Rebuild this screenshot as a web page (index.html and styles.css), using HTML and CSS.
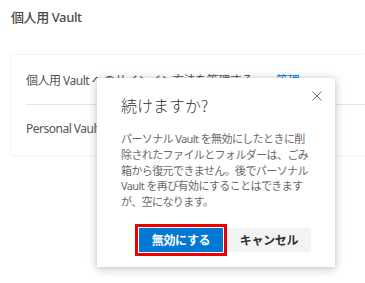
FILE: index.html
```html
<!DOCTYPE html>
<html lang="ja">
<head>
<meta charset="utf-8">
<link rel="stylesheet" href="styles.css">
</head>
<body>
<div class="page">
  <h1 class="page-title">個人用 Vault</h1>
  <section class="card">
    <div class="row row-first">
      <span class="row-text">個人用 Vault へのサインイン方法を管理する。</span>
      <a class="row-link">管理</a>
    </div>
    <div class="row row-second">
      <span class="row-text">Personal Vault を無効にする</span>
    </div>
  </section>
</div>

<div class="dialog" role="dialog">
  <button class="close" aria-label="閉じる">
    <svg width="10" height="10" viewBox="0 0 10 10"><path d="M0.5 0.5 L9.5 9.5 M9.5 0.5 L0.5 9.5" stroke="#6b6b6b" stroke-width="1" fill="none"/></svg>
  </button>
  <h2 class="dialog-title">続けますか?</h2>
  <p class="dialog-body">パーソナル Vault を無効にしたときに削<br>除されたファイルとフォルダーは、ごみ<br>箱から復元できません。後でパーソナル<br>Vault を再び有効にすることはできます<br>が、空になります。</p>
  <div class="actions">
    <button class="btn btn-primary">無効にする</button>
    <button class="btn btn-secondary">キャンセル</button>
  </div>
</div>
</body>
</html>
```

FILE: styles.css
```css
html, body {
  margin: 0;
  padding: 0;
  background: #ffffff;
  overflow: hidden;
  width: 365px;
  height: 283px;
}
body {
  font-family: "Noto Sans", "Noto Sans CJK JP", sans-serif;
  color: #333333;
  position: relative;
}
.page {
  padding: 7px 0 0 11px;
}
.page-title {
  margin: 0;
  font-size: 13px;
  line-height: 20px;
  font-weight: 500;
  color: #4a4a4a;
  letter-spacing: -0.4px;
}
.card {
  margin-top: 28px;
  width: 354px;
  background: #ffffff;
  box-shadow: 0 0 2px rgba(0, 0, 0, 0.14);
  padding-left: 15px;
  box-sizing: border-box;
  overflow: hidden;
}
.row {
  display: flex;
  align-items: center;
  font-size: 12px;
  line-height: 16px;
  color: #555555;
  white-space: nowrap;
}
.row-first {
  padding: 18px 0 15px;
  border-bottom: 1px solid #e6e6e6;
}
.row-second {
  padding: 16px 0 18px;
}
.row-text {
  letter-spacing: -0.5px;
}
.row-link {
  margin-left: 12px;
  color: #0078d4;
  letter-spacing: -0.5px;
}
.dialog {
  position: absolute;
  left: 97px;
  top: 78px;
  width: 238px;
  box-sizing: border-box;
  padding: 15px 24px 15px 24px;
  background: #ffffff;
  box-shadow: 0 2px 10px rgba(0, 0, 0, 0.22), 0 0 3px rgba(0, 0, 0, 0.1);
}
.close {
  position: absolute;
  top: 13px;
  right: 13px;
  width: 10px;
  height: 10px;
  padding: 0;
  border: 0;
  background: transparent;
  display: flex;
}
.dialog-title {
  margin: 0;
  font-family: "Noto Sans CJK JP", sans-serif;
  font-size: 16px;
  line-height: 24px;
  font-weight: 300;
  color: #333333;
}
.dialog-body {
  margin: 14px 0 0;
  font-size: 11px;
  line-height: 15.75px;
  letter-spacing: -0.6px;
  color: #6a6a6a;
  white-space: nowrap;
}
.actions {
  margin-top: 18px;
  display: flex;
  justify-content: flex-end;
  gap: 4px;
}
.btn {
  width: 84px;
  height: 24px;
  border: 0;
  padding: 0;
  font-family: "Noto Sans CJK JP", sans-serif;
  font-size: 12px;
  font-weight: 700;
  letter-spacing: -0.3px;
}
.btn-primary {
  background: #0078d4;
  color: #ffffff;
  outline: 3px solid #ee0000;
  outline-offset: 1px;
}
.btn-secondary {
  background: #f3f3f3;
  color: #333333;
}
```
